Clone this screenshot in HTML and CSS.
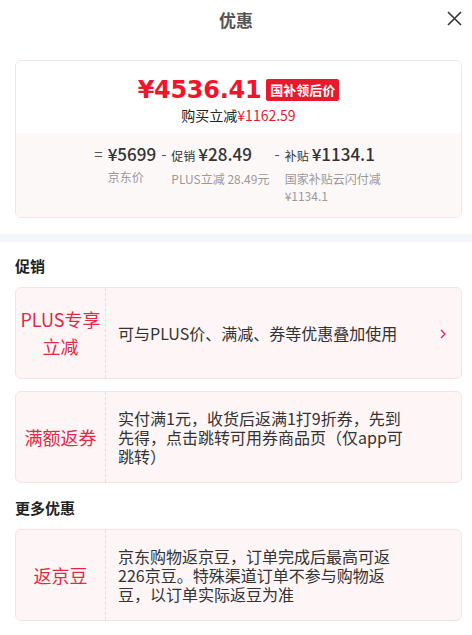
FILE: index.html
```html
<!DOCTYPE html>
<html lang="zh-CN">
<head>
    <meta charset="UTF-8">
    <meta name="viewport" content="width=device-width, initial-scale=1.0">
    <title>优惠</title>
    <link rel="stylesheet" href="styles.css">
</head>
<body>
<div class="panel">
    <div class="header">
        <h1>优惠</h1>
        <span class="close">
            <svg width="15" height="15" viewBox="0 0 15 15"><path d="M1 1 L14 14 M14 1 L1 14" stroke="#333" stroke-width="1.6" fill="none"/></svg>
        </span>
    </div>

    <div class="summary">
        <div class="summary-top">
            <div class="final">
                <span class="final-price">¥4536.41</span>
                <span class="badge">国补领后价</span>
            </div>
            <div class="saved">购买立减<span class="red">¥1162.59</span></div>
        </div>
        <div class="summary-bottom">
            <div class="calc">
                <span class="op">=</span>
                <div class="part">
                    <div class="amount">¥5699</div>
                    <div class="note">京东价</div>
                </div>
            </div>
            <div class="calc">
                <span class="op">-</span>
                <div class="part">
                    <div class="amount"><small>促销</small>¥28.49</div>
                    <div class="note">PLUS立减 28.49元</div>
                </div>
            </div>
            <div class="calc">
                <span class="op">-</span>
                <div class="part narrow">
                    <div class="amount"><small>补贴</small>¥1134.1</div>
                    <div class="note">国家补贴云闪付减¥1134.1</div>
                </div>
            </div>
        </div>
    </div>

    <div class="band"></div>

    <div class="section">
        <h2>促销</h2>
        <div class="promo">
            <div class="promo-tag">PLUS专享<br>立减</div>
            <div class="promo-text">可与PLUS价、满减、券等优惠叠加使用</div>
            <span class="arrow">
                <svg width="6" height="10" viewBox="0 0 6 10"><path d="M1 1 L5 5 L1 9" stroke="#e0294a" stroke-width="1.3" fill="none"/></svg>
            </span>
        </div>
        <div class="promo">
            <div class="promo-tag">满额返券</div>
            <div class="promo-text">实付满1元，收货后返满1打9折券，先到先得，点击跳转可用券商品页（仅app可跳转）</div>
        </div>

        <h2>更多优惠</h2>
        <div class="promo">
            <div class="promo-tag">返京豆</div>
            <div class="promo-text">京东购物返京豆，订单完成后最高可返226京豆。特殊渠道订单不参与购物返豆，以订单实际返豆为准</div>
        </div>
    </div>
</div>
</body>
</html>
```

FILE: styles.css
```css
body {
    font-family: "Noto Sans CJK SC", "Noto Sans", sans-serif;
    background-color: #fff;
    color: #333;
    margin: 0;
}
.panel {
    width: 472px;
}
.header {
    position: relative;
    height: 38px;
    display: flex;
    align-items: center;
    justify-content: center;
}
.header h1 {
    margin: 0;
    font-size: 17px;
    font-weight: bold;
    color: #555;
}
.close {
    position: absolute;
    right: 10px;
    top: 11px;
    display: flex;
}

/* price summary card */
.summary {
    margin: 22px 10px 0 15px;
    border: 1px solid #f3e3e6;
    border-radius: 6px;
    overflow: hidden;
}
.summary-top {
    height: 72px;
    box-sizing: border-box;
    padding-top: 14px;
    display: flex;
    flex-direction: column;
    align-items: center;
    background-color: #fff;
}
.final {
    display: flex;
    align-items: center;
    height: 30px;
}
.final-price {
    font-family: "DejaVu Sans", sans-serif;
    font-size: 24px;
    font-weight: bold;
    line-height: 30px;
    color: #f2132c;
    letter-spacing: -0.3px;
}
.badge {
    margin-left: 5px;
    padding: 1px 4px;
    background-color: #e8192c;
    color: #fff;
    font-size: 13px;
    font-weight: bold;
    border-radius: 2px;
    line-height: 20px;
}
.saved {
    font-size: 14px;
    line-height: 20px;
    color: #222;
}
.red {
    color: #e8192c;
}
.summary-bottom {
    height: 84px;
    box-sizing: border-box;
    padding-top: 9px;
    background-color: #fdf8f8;
    display: flex;
    justify-content: center;
    gap: 5px;
}
.calc {
    display: flex;
    align-items: flex-start;
}
.op {
    font-size: 15px;
    color: #555;
    line-height: 24px;
    margin-right: 5px;
}
.amount {
    font-size: 17px;
    font-weight: 500;
    color: #333;
    line-height: 24px;
    white-space: nowrap;
}
.amount small {
    font-size: 12px;
    font-weight: normal;
    margin-right: 3px;
}
.note {
    font-size: 12px;
    color: #999;
    line-height: 17px;
    margin-top: 2px;
}
.narrow {
    width: 98px;
}

.band {
    height: 8px;
    margin-top: 16px;
    background-color: #f5f6fa;
}

/* promotions */
.section {
    padding: 11px 10px 0 15px;
}
.section h2 {
    margin: 0;
    font-size: 15px;
    font-weight: bold;
    color: #222;
    line-height: 20px;
    padding: 3px 0 11px;
}
.promo {
    position: relative;
    display: flex;
    min-height: 92px;
    margin-bottom: 12px;
    background-color: #fdf5f6;
    border: 1px solid #f5e3e6;
    border-radius: 6px;
    box-sizing: border-box;
}
.promo-tag {
    flex: 0 0 89px;
    display: flex;
    align-items: center;
    justify-content: center;
    text-align: center;
    border-right: 1px dashed #f0d6da;
    font-size: 18px;
    line-height: 27px;
    color: #df2a45;
}
.promo-text {
    flex: 1;
    display: flex;
    align-items: center;
    padding: 0 52px 0 12px;
    font-size: 16px;
    line-height: 19px;
    color: #333;
}
.arrow {
    position: absolute;
    right: 15px;
    top: 41px;
    display: flex;
}
```
